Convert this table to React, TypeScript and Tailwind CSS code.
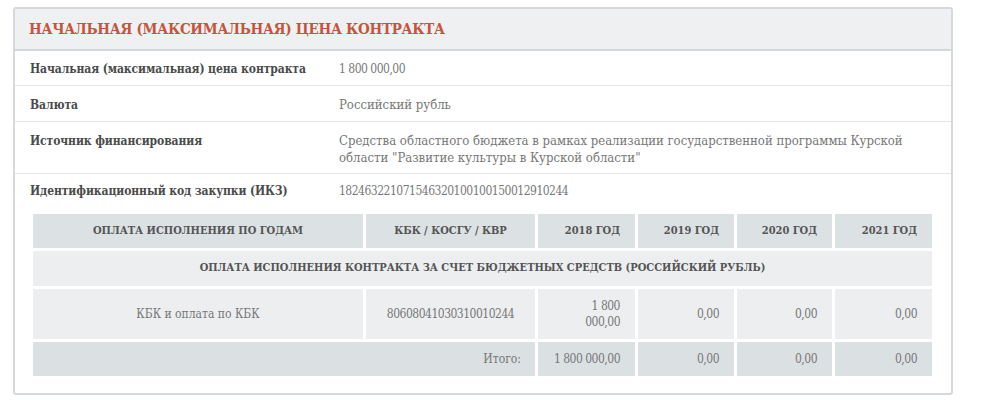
import React from 'react'

const font = { fontFamily: '"DejaVu Serif", "Liberation Serif", serif', fontStretch: 'condensed' as const }

const rows = [
  { label: 'Начальная (максимальная) цена контракта', value: '1 800 000,00', num: true },
  { label: 'Валюта', value: 'Российский рубль', num: false },
  {
    label: 'Источник финансирования',
    value:
      'Средства областного бюджета в рамках реализации государственной программы Курской области "Развитие культуры в Курской области"',
    num: false,
  },
  { label: 'Идентификационный код закупки (ИКЗ)', value: '182463221071546320100100150012910244', num: true },
]

const years = ['2018 ГОД', '2019 ГОД', '2020 ГОД', '2021 ГОД']
const num = 'text-[12px] tracking-[-0.5px]'

export default function App() {
  return (
    <div className="w-[998px] h-[400px] bg-white pt-[7px] pl-[13px]" style={font}>
      <div className="w-[940px] border-2 border-[#d6d9db] rounded-[3px] pb-[17px]">
        <div className="h-[42px] bg-[#eef0f1] border-b-2 border-[#d3d7d9] px-[14px] flex items-center">
          <h2 className="text-[15px] font-bold text-[#c5553a] uppercase tracking-[-0.3px]">
            Начальная (максимальная) цена контракта
          </h2>
        </div>

        {rows.map((r, i) => (
          <div
            key={r.label}
            className={
              i < 3
                ? 'flex items-baseline border-b border-[#e4e6e7] px-[15px] pt-[10px] pb-[7px] text-[13px] leading-[17px]'
                : 'flex items-baseline px-[15px] pt-[9px] pb-[8px] text-[13px] leading-[17px]'
            }
          >
            <div className="w-[309px] shrink-0 font-bold text-[12px] tracking-[-0.1px] text-[#4a4a4a]">{r.label}</div>
            <div className={r.num ? 'w-[570px] text-[#777] ' + num : 'w-[570px] text-[#777]'}>{r.value}</div>
          </div>
        ))}

        <div className="mx-[18px] mt-[6px] grid grid-cols-[330px_169px_97px_96px_95px_97px] gap-x-[3px] gap-y-[3px] text-[11px] text-[#555]">
          <div className="h-[34px] bg-[#dce1e4] flex items-center justify-center font-bold">ОПЛАТА ИСПОЛНЕНИЯ ПО ГОДАМ</div>
          <div className="h-[34px] bg-[#dce1e4] flex items-center justify-center font-bold">КБК / КОСГУ / КВР</div>
          {years.map((y) => (
            <div key={y} className="h-[34px] bg-[#dce1e4] flex items-center justify-end pr-[15px] font-bold">{y}</div>
          ))}

          <div className="col-span-6 h-[35px] bg-[#eceef0] flex items-center justify-center font-bold">
            ОПЛАТА ИСПОЛНЕНИЯ КОНТРАКТА ЗА СЧЕТ БЮДЖЕТНЫХ СРЕДСТВ (РОССИЙСКИЙ РУБЛЬ)
          </div>

          <div className="h-[50px] bg-[#eceef0] flex items-center justify-center text-[#777] text-[12px]">КБК и оплата по КБК</div>
          <div className={'h-[50px] bg-[#eceef0] flex items-center justify-center text-[#777] ' + num}>80608041030310010244</div>
          <div className={'h-[50px] bg-[#eceef0] flex items-center justify-end pr-[15px] text-right text-[#777] leading-[16px] ' + num}>
            1 800<br />000,00
          </div>
          {['0,00', '0,00', '0,00'].map((v, i) => (
            <div key={i} className={'h-[50px] bg-[#eceef0] flex items-center justify-end pr-[15px] text-[#777] ' + num}>{v}</div>
          ))}

          <div className="col-span-2 h-[34px] bg-[#dbe0e3] flex items-center justify-end pr-[14px] text-[#777] text-[12px]">Итого:</div>
          <div className={'h-[34px] bg-[#dbe0e3] flex items-center justify-end pr-[15px] text-[#777] whitespace-nowrap ' + num}>1 800 000,00</div>
          {['0,00', '0,00', '0,00'].map((v, i) => (
            <div key={i} className={'h-[34px] bg-[#dbe0e3] flex items-center justify-end pr-[15px] text-[#777] ' + num}>{v}</div>
          ))}
        </div>
      </div>
    </div>
  )
}
